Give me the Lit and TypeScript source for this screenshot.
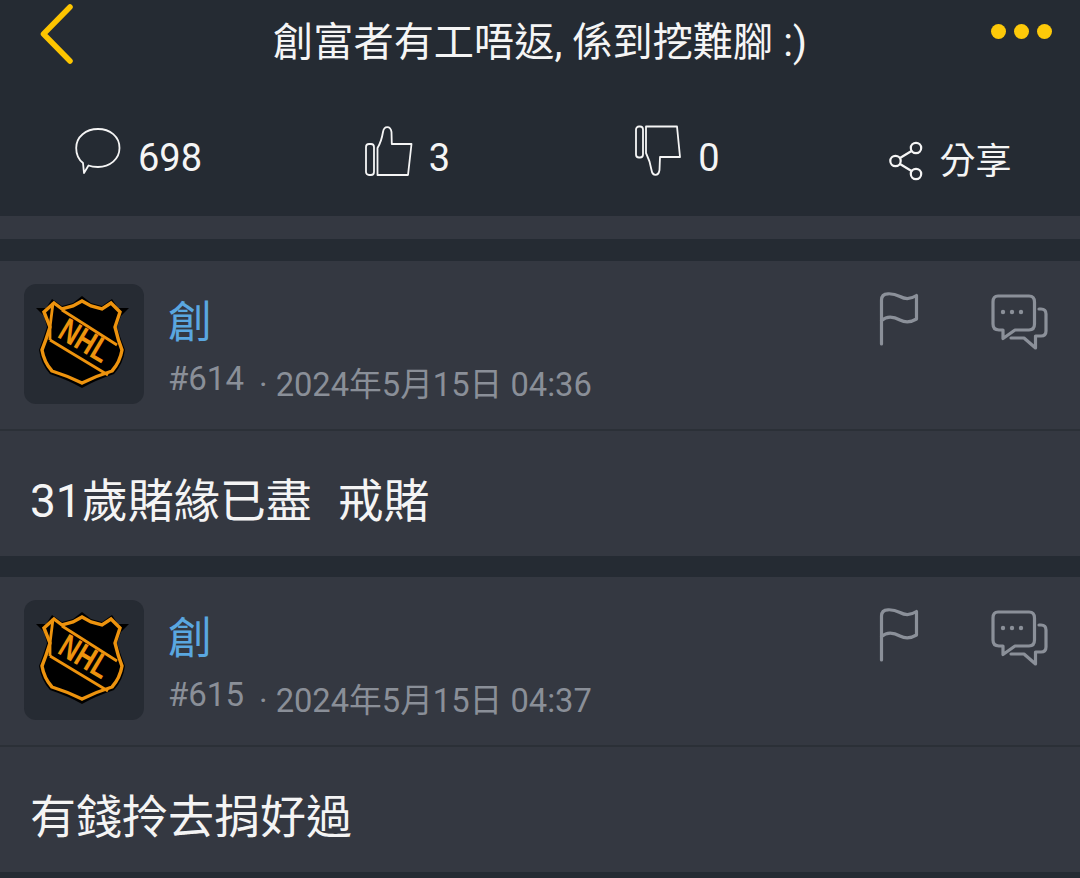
import { LitElement, html, css, svg } from "lit";
import { customElement } from "lit/decorators.js";

const shield = svg`
  <path d="M12 24 L22 24 L28 15 L38 22 L49 19 L58 12 L67 19 L78 22 L88 15 L94 24 L105 24 L97 32 L93 43 Q97 56 101 66 Q99 80 90 90 Q72 96 58 104 Q44 96 26 90 Q17 80 15 66 Q19 56 23 43 L20 32 Z" fill="#000"/>
  <path d="M30 19 L38 25 L49 22 L58 17 L67 22 L78 25 L87 19 L96 28 L91 43 Q94 56 98 66 Q96 78 88 87 Q72 92 58 99 Q44 92 28 87 Q20 78 18 66 Q22 56 26 43 L20 28 Z" fill="#000" stroke="#ed930e" stroke-width="3.4"/>
  <path d="M38 26 L93 61 M26 56 L84 91" stroke="#ed930e" stroke-width="2.8" fill="none"/>
  <path d="M29 19 L26 43 L26 56" stroke="#ed930e" stroke-width="2.8" fill="none"/>
  <text class="nhl" text-anchor="middle" transform="translate(55 66) rotate(31) scale(.78 1)">NHL</text>
`;

@customElement("app-post")
class AppPost extends LitElement {
  static properties = { num: {}, time: {}, body: {} };
  num = "";
  time = "";
  body = "";
  static styles = css`
    :host { display: block; background: #343841; }
    .head { height: 170px; box-sizing: border-box; border-bottom: 2px solid #2b3037; padding: 23px 0 0 24px; display: flex; }
    .avatar { width: 120px; height: 120px; background: #262b33; border-radius: 12px; flex: none; }
    .avatar svg { display: block; }
    .nhl { font: bold 33px "Liberation Sans", sans-serif; fill: #ed930e; }
    .meta { margin-left: 24px; display: flex; flex-direction: column; }
    .name { font: 44px/52px "Noto Sans CJK TC", sans-serif; color: #5aa7e0; margin-top: 9px; }
    .sub { display: flex; align-items: flex-start; margin-top: 14px; color: #8a8f98; font-family: Roboto, "Noto Sans CJK TC", sans-serif; }
    .num { font-size: 33px; line-height: 40px; }
    .time { font-size: 32.7px; line-height: 40px; margin: 6px 0 0 15px; }
    .actions { margin-left: auto; display: flex; padding: 8px 32px 0 0; gap: 72px; align-items: flex-start; }
    .actions svg { display: block; fill: none; stroke: #8b9099; stroke-width: 3.2; stroke-linecap: round; stroke-linejoin: round; }
    .actions .chat { margin-top: 2px; }
    .actions circle { fill: #8b9099; stroke: none; }
    .body { height: 125px; padding: 14px 0 0 30px; display: flex; align-items: center; font: 46px/60px Roboto, "Noto Sans CJK TC", sans-serif; word-spacing: 1.5px; color: #f4f4f4; white-space: pre; box-sizing: border-box; }
  `;
  render() {
    return html`
      <div class="head">
        <div class="avatar"><svg width="120" height="120" viewBox="0 0 120 120">${shield}</svg></div>
        <div class="meta">
          <div class="name">創</div>
          <div class="sub"><span class="num">${this.num}</span><span class="time">· ${this.time}</span></div>
        </div>
        <div class="actions">
          <svg width="40" height="54" viewBox="0 0 40 54"><path d="M2.5 52 V8 Q2.5 2 9 1.8 Q15 1.5 21 4.5 Q29 9 37.5 3.5 V27 Q29 32 21 28 Q10 22 2.5 28.5"/></svg>
          <svg class="chat" width="57" height="56" viewBox="0 0 57 56">
            <path d="M7 2 H38 Q43.5 2 43.5 8 V30 Q43.5 36 38 36 H24 L12 44.5 V36 H8 Q2 36 2 30 V8 Q2 2 7 2 Z"/>
            <path d="M48 15 H50 Q55 15 55 20 V37 Q55 42 50 42 H44.5 V54 L33 44 H20"/>
            <circle cx="12" cy="18" r="2.2"/><circle cx="21" cy="18" r="2.2"/><circle cx="30" cy="18" r="2.2"/>
          </svg>
        </div>
      </div>
      <div class="body">${this.body}</div>
    `;
  }
}

@customElement("app-root")
class AppRoot extends LitElement {
  static styles = css`
    :host { display: block; width: 1080px; height: 878px; overflow: hidden; background: #252b33; font-family: Roboto, "Noto Sans CJK TC", sans-serif; }
    .top { height: 216px; display: flex; flex-direction: column; color: #f5f5f5; }
    .titlebar { height: 90px; display: grid; grid-template-columns: 130px 1fr 130px; align-items: start; }
    .back { display: block; margin: 3px 0 0 39px; fill: none; stroke: #fdc500; stroke-width: 5.5; stroke-linecap: round; stroke-linejoin: round; }
    .title { text-align: center; font-size: 40.2px; line-height: 48px; padding-top: 19px; white-space: nowrap; }
    .dots { display: flex; gap: 8px; justify-content: flex-end; padding: 24px 28px 0 0; }
    .dots i { width: 15px; height: 15px; border-radius: 50%; background: #fdc909; }
    .stats { display: grid; grid-template-columns: repeat(4, 1fr); padding: 35px 0 0 4px; }
    .stat { display: flex; justify-content: center; align-items: center; gap: 17px; font-size: 38px; line-height: 50px; height: 52px; }
    .stat span { padding-top: 14px; }
    .stat svg { display: block; fill: none; stroke: #f5f5f5; stroke-width: 1.8; stroke-linejoin: round; stroke-linecap: round; flex: none; }
    .stat.share { font-size: 36px; gap: 16px; padding-left: 10px; }
    .stat.share span { padding-top: 22px; }
    .stat.share svg { margin-top: 19px; stroke-width: 2.2; }
    .stat.thumb { gap: 16px; }
    .strip { height: 23px; background: #343841; }
    .gap { height: 22px; }
    .gap.g2 { height: 21px; }
  `;
  render() {
    return html`
      <div class="top">
        <div class="titlebar">
          <svg class="back" width="36" height="62" viewBox="0 0 36 62"><path d="M31 4 L4.5 31 L31 58"/></svg>
          <div class="title">創富者有工唔返, 係到挖難腳 :)</div>
          <div class="dots"><i></i><i></i><i></i></div>
        </div>
        <div class="stats">
          <div class="stat">
            <svg width="46" height="48" viewBox="0 0 46 48"><path d="M23 2 C35 2 44.5 9.5 44.5 21 C44.5 32 35 40 23 40 C19.5 40 16 39.5 13.5 38.5 L9 46 L8 36 C3.5 32.5 1.2 27 1.2 21 C1.2 9.5 11 2 23 2 Z"/></svg>
            <span>698</span>
          </div>
          <div class="stat thumb">
            <svg width="48" height="52" viewBox="0 0 48 52"><rect x="1" y="19" width="8" height="31" rx="3"/><path d="M12.5 50 V23 C15 19 17 13 18 7 C19 0.5 25.5 0.5 26.5 7 L26.8 19 H46.5 L43 50 Z"/></svg>
            <span>3</span>
          </div>
          <div class="stat">
            <svg width="48" height="52" viewBox="0 0 48 52"><rect x="3" y="1.5" width="7" height="31" rx="3"/><path d="M13 1.5 H44 L47 32 H27 L26.5 45 C25.5 51.5 19.5 51.5 18.5 45 C17.5 38 15.5 33 13 28 Z"/></svg>
            <span>0</span>
          </div>
          <div class="stat share">
            <svg width="34" height="40" viewBox="0 0 34 40"><circle cx="27" cy="7" r="5.2"/><circle cx="6.5" cy="20" r="5.2"/><circle cx="27" cy="33" r="5.2"/><path d="M11 17 L22.5 10 M11 23 L22.5 30"/></svg>
            <span>分享</span>
          </div>
        </div>
      </div>
      <div class="strip"></div>
      <div class="gap"></div>
      <app-post num="#614" time="2024年5月15日 04:36" body="31歲賭緣已盡  戒賭"></app-post>
      <div class="gap g2"></div>
      <app-post num="#615" time="2024年5月15日 04:37" body="有錢拎去捐好過"></app-post>
    `;
  }
}
